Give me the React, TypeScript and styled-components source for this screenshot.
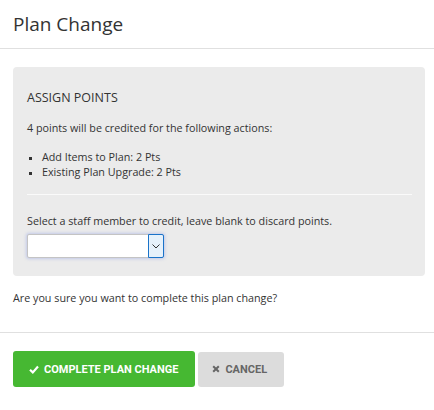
import React from 'react'
import styled, { createGlobalStyle } from 'styled-components'

const GlobalStyle = createGlobalStyle`
  html, body {
    margin: 0;
    padding: 0;
    background: #fff;
  }
  body {
    font-family: 'Open Sans', 'Liberation Sans', sans-serif;
    color: #333;
  }
`

const Modal = styled.div`
  width: 434px;
  background: #fff;
`

const Header = styled.div`
  padding: 11px 13px 11px;
  border-bottom: 1px solid #e0e0e0;
`

const Title = styled.h4`
  margin: 0;
  font-size: 19px;
  font-weight: 400;
  line-height: 26px;
  color: #333;
`

const Body = styled.div`
  padding: 18px 9px 26px 13px;
`

const Panel = styled.div`
  background: #ebebeb;
  border-radius: 4px;
  padding: 22px 13px 18px 14px;
`

const PanelTitle = styled.div`
  font-size: 12.5px;
  line-height: 18px;
  color: #333;
  text-transform: uppercase;
  margin-bottom: 14px;
`

const Text = styled.p`
  margin: 0;
  font-size: 10.75px;
  line-height: 15px;
  color: #333;
`

const List = styled.ul`
  margin: 14px 0 14px;
  padding: 0 0 0 15px;
  list-style: square;
  font-size: 10.75px;
  line-height: 15px;
  li::marker {
    font-size: 9px;
  }
`

const Rule = styled.hr`
  border: 0;
  border-top: 1px solid #fafafa;
  margin: 0 0 19px;
`

const SelectBox = styled.div`
  margin-top: 5px;
  width: 137px;
  height: 24px;
  box-sizing: border-box;
  display: flex;
  background: #fff;
  border: 1px solid #c4c4c4;
  border-radius: 2px;
  box-shadow: 0 0 3px 1px rgba(120, 140, 230, 0.35);
`

const SelectValue = styled.div`
  flex: 1;
`

const SelectArrow = styled.div`
  width: 16px;
  box-sizing: border-box;
  border: 1px solid #1a73c9;
  margin: -1px -1px -1px 0;
  background: #e6f1fb;
  display: flex;
  align-items: center;
  justify-content: center;
  border-radius: 0 2px 2px 0;
`

const Confirm = styled(Text)`
  margin-top: 15px;
`

const Footer = styled.div`
  border-top: 1px solid #e0e0e0;
  padding: 18px 13px 23px;
  display: flex;
  align-items: center;
  gap: 3px;
`

const Button = styled.button<{ $variant: 'success' | 'default' }>`
  display: inline-flex;
  align-items: center;
  gap: 5px;
  height: ${p => (p.$variant === 'success' ? '36px' : '35px')};
  padding: 0 ${p => (p.$variant === 'success' ? '17px' : '17px')} 0 ${p => (p.$variant === 'success' ? '16px' : '14px')};
  border: 0;
  border-radius: 3px;
  font-family: 'Roboto', 'Liberation Sans', sans-serif;
  font-weight: 700;
  font-size: 11px;
  text-transform: uppercase;
  background: ${p => (p.$variant === 'success' ? '#46b832' : '#dcdcdc')};
  color: ${p => (p.$variant === 'success' ? '#fff' : '#666')};
  cursor: pointer;
`

const Check = () => (
  <svg width="10" height="9" viewBox="0 0 10 9">
    <path d="M1 4.8 L3.8 7.4 L9 1.6" fill="none" stroke="#fff" strokeWidth="2.2" />
  </svg>
)

const Cross = () => (
  <svg width="8" height="8" viewBox="0 0 8 8">
    <path d="M1.2 1.2 L6.8 6.8 M6.8 1.2 L1.2 6.8" fill="none" stroke="#666" strokeWidth="2" />
  </svg>
)

const Chevron = () => (
  <svg width="8" height="5" viewBox="0 0 8 5">
    <path d="M0.5 0.5 L4 4 L7.5 0.5" fill="none" stroke="#333" strokeWidth="1" />
  </svg>
)

const App: React.FC = () => (
  <>
    <GlobalStyle />
    <Modal>
      <Header>
        <Title>Plan Change</Title>
      </Header>
      <Body>
        <Panel>
          <PanelTitle>Assign Points</PanelTitle>
          <Text>4 points will be credited for the following actions:</Text>
          <List>
            <li>Add Items to Plan: 2 Pts</li>
            <li>Existing Plan Upgrade: 2 Pts</li>
          </List>
          <Rule />
          <Text>Select a staff member to credit, leave blank to discard points.</Text>
          <SelectBox>
            <SelectValue />
            <SelectArrow><Chevron /></SelectArrow>
          </SelectBox>
        </Panel>
        <Confirm>Are you sure you want to complete this plan change?</Confirm>
      </Body>
      <Footer>
        <Button $variant="success"><Check />Complete Plan Change</Button>
        <Button $variant="default"><Cross />Cancel</Button>
      </Footer>
    </Modal>
  </>
)

export default App
